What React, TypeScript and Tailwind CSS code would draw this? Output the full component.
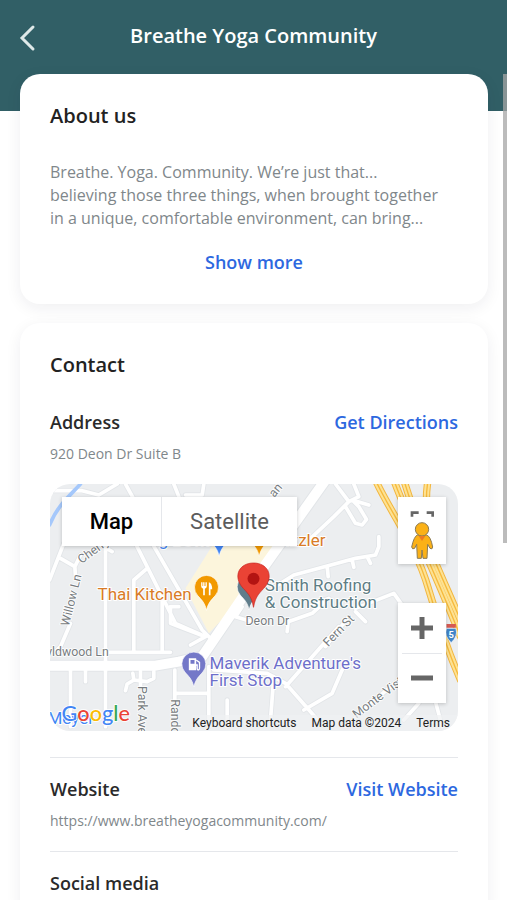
import type { ReactNode } from "react";

const localRoads = [
  "M12 32 L110 32 L160 45 L215 12",
  "M240 12 L262 52 M385 12 L400 50 M420 45 L470 45 L475 12",
  "M55 190 L12 300 M45 235 L88 260 L90 290 M88 260 L105 225",
  "M75 430 L45 500 L30 515",
  "M180 190 L180 740 M165 195 L200 215",
  "M270 190 L390 430 L480 470 M320 190 L470 450 L500 480",
  "M305 265 L265 300 L265 515 M350 355 L350 515",
  "M190 517 L375 517",
  "M75 570 L75 740 M120 560 L120 605",
  "M262 580 L265 600 L245 612 L240 632 M265 600 L305 605 L325 595 L325 575 M285 575 L285 620",
  "M400 380 L375 380 L375 430 L400 440 L480 470 L435 495",
  "M388 570 L388 660 M388 640 L490 640 L490 560 M490 640 L490 740 M545 660 L545 740",
  "M870 12 L910 65 L865 110 L790 180 M910 65 L940 50 L925 12 M900 80 L930 130 L950 135 L963 118 L940 80 L920 60 L970 75",
  "M690 320 L745 285 L845 258 L930 235 L990 225 L1000 200 L1000 170 M845 258 L848 290 M920 240 L925 262 M965 230 L975 250",
  "M570 410 L620 425 M590 380 L570 410 M725 455 L728 425 L800 400 L850 355 L800 375",
  "M930 385 L1045 340 L1070 375 M930 395 L960 425",
  "M880 440 L720 620 M910 410 L840 500 M505 570 L665 580 L720 610 L830 735",
  "M685 590 L675 720 M775 690 L860 640 L890 570",
  "M900 740 L1000 650 L1060 600 M1075 720 L1120 670 M1170 665 L1190 740",
];

const mainRoads = ["M12 557 L330 557 L400 545 L470 530", "M840 0 L620 310 L470 530"];

const freeways = [
  "M990 0 C1030 90 1110 190 1150 330 C1190 460 1210 520 1245 600",
  "M1045 0 C1080 100 1150 230 1245 470",
  "M1075 0 C1110 120 1180 270 1245 420",
  "M1148 0 C1140 40 1140 80 1150 150",
];

function Pin({ x, y, color, children }: { x: number; y: number; color: string; children?: ReactNode }) {
  return (
    <g transform={`translate(${x} ${y})`}>
      <path
        d="M0 66 C-5 42 -16 34 -27 21 A36 36 0 1 1 27 21 C16 34 5 42 0 66 Z"
        fill={color}
        stroke="#fff"
        strokeWidth="2"
      />
      {children}
    </g>
  );
}

function MapCanvas() {
  return (
    <svg
      viewBox="12 12 1227 741"
      preserveAspectRatio="xMidYMid slice"
      className="block h-full w-full"
      style={{ fontFamily: "Roboto, sans-serif" }}
      role="img"
      aria-label="Map of 920 Deon Dr"
    >
      <rect width="1260" height="770" fill="#eceef0" />

      {/* streets */}
      <g fill="none" strokeLinejoin="round" strokeLinecap="round">
        <path d={localRoads.join(" ")} stroke="#e2e5e8" strokeWidth="16" />
        <path d={mainRoads.join(" ")} stroke="#e2e5e8" strokeWidth="36" />
        <path d="M505 190 L690 190 L665 280 L490 460 L420 325 Z" fill="#fcf5dc" />
        <path d={localRoads.join(" ")} stroke="#fff" strokeWidth="11" />
        <path d={mainRoads.join(" ")} stroke="#fff" strokeWidth="30" />
        <path d="M12 135 C35 80 60 60 105 12" stroke="#a5c8fb" strokeWidth="11" />
        <path d={freeways.join(" ")} stroke="#f2b63f" strokeWidth="22" />
        <path d={freeways.join(" ")} stroke="#fde293" strokeWidth="16" />
        <path d={freeways.join(" ")} stroke="#f6b93c" strokeWidth="4" />
      </g>

      {/* street names */}
      <g fill="#777c80" fontSize="37" stroke="#fff" strokeWidth="5" paintOrder="stroke" strokeLinejoin="round">
        <text transform="translate(108 252) rotate(-36)">Cherry St</text>
        <text transform="translate(70 440) rotate(-76)">Willow Ln</text>
        <text x="2" y="528">yldwood Ln</text>
        <text transform="translate(276 618) rotate(90)">Park Ave</text>
        <text transform="translate(376 658) rotate(90)">Randolph</text>
        <text x="600" y="435">Deon Dr</text>
        <text transform="translate(848 502) rotate(-46)">Fern St</text>
        <text transform="translate(933 716) rotate(-37)">Monte Vista</text>
        <text transform="translate(686 54) rotate(-50)">an</text>
      </g>

      {/* places */}
      <g fontSize="51" stroke="#fff" strokeWidth="6" paintOrder="stroke" strokeLinejoin="round">
        <text x="156" y="359" fill="#d97b26">Thai Kitchen</text>
        <text x="690" y="199" fill="#d97b26">Sizzler</text>
        <text x="340" y="197" fill="#4285f4">g Bowl</text>
        <text x="658" y="333" fill="#5e7d84">Smith Roofing</text>
        <text x="658" y="385" fill="#5e7d84">&amp; Construction</text>
        <text x="492" y="566" fill="#6d6fca">Maverik Adventure's</text>
        <text x="492" y="618" fill="#6d6fca">First Stop</text>
        <text x="6" y="731" fill="#4285f4">Meyer</text>
      </g>
      <Pin x={521} y={163} color="#4285f4" />
      <Pin x={641} y={163} color="#f29900" />
      <Pin x={483} y={325} color="#f29900">
        <path
          d="M-16 -18 V-6 Q-16 0 -10 1 V21 H-5 V1 Q1 0 1 -6 V-18 H-3 V-7 H-6 V-18 H-10 V-7 H-12 V-18 Z M7 21 V-18 Q17 -15 17 3 H12 V21 Z"
          fill="#fff"
        />
      </Pin>
      <Pin x={445} y={555} color="#7478c8">
        <path d="M-15 -20 H7 V16 H-15 Z" fill="#fff" />
        <path d="M-10 -15 H2 V-4 H-10 Z" fill="#7478c8" />
        <path d="M7 -15 L17 -8 V10 Q17 15 13 15 Q10 15 10 10 V0 H6" fill="none" stroke="#fff" strokeWidth="4" />
      </Pin>
      <Pin x={611} y={324} color="#607d8b" />
      <path
        d="M624 382 C618 346 604 338 588 319 C563 285 583 249 624 249 C665 249 685 285 660 319 C644 338 630 346 624 382 Z"
        fill="#ea4335"
        stroke="#c5221f"
        strokeWidth="2"
      />
      <circle cx="624" cy="296" r="18" fill="#b31412" />

      {/* interstate shield */}
      <path d="M1203 445 H1231 Q1239 468 1217 488 Q1195 468 1203 445 Z" fill="#4285c8" stroke="#fff" strokeWidth="2" />
      <path d="M1203 432 H1231 V443 H1203 Z" fill="#d65a52" />
      <text x="1217" y="474" fill="#fff" fontSize="28" fontWeight="700" textAnchor="middle">5</text>

      <text
        x="48"
        y="724"
        fontFamily="Lato, sans-serif"
        fontSize="65"
        fontWeight="500"
        stroke="#fff"
        strokeWidth="5"
        paintOrder="stroke"
      >
        <tspan fill="#4285f4">G</tspan>
        <tspan fill="#ea4335">o</tspan>
        <tspan fill="#fbbc04">o</tspan>
        <tspan fill="#4285f4">g</tspan>
        <tspan fill="#34a853">l</tspan>
        <tspan fill="#ea4335">e</tspan>
      </text>
    </svg>
  );
}

function Pegman() {
  return (
    <svg viewBox="0 0 72 144" className="h-12 w-6" aria-hidden="true">
      <path d="M6 17 V5 H26 M50 5 H68 V17" fill="none" stroke="#666" strokeWidth="8" />
      <g fill="#fbb117" stroke="#8b7b55" strokeWidth="3" strokeLinejoin="round">
        <path d="M22 72 Q12 76 5 108 Q7 117 14 112 L20 100 L22 142 H34 L36 117 L39 142 H51 L53 100 L60 112 Q67 117 68 108 Q62 76 50 72 Z" />
        <circle cx="36" cy="55" r="20" />
      </g>
      <path d="M26 75 H46 L36 90 Z" fill="#ee7b22" />
    </svg>
  );
}

function MapPanel() {
  return (
    <div className="relative h-[247px] overflow-hidden rounded-[20px] font-[Roboto,sans-serif]">
      <MapCanvas />
      <div className="absolute top-[13px] left-3 flex h-[49px] bg-white text-[22px] shadow-[0_1px_4px_rgba(0,0,0,0.2)]">
        <button type="button" className="w-[100px] border-r border-gray-200 font-medium text-black">
          Map
        </button>
        <button type="button" className="w-[135px] text-[#5c5c5c]">
          Satellite
        </button>
      </div>
      <button
        type="button"
        aria-label="Street View"
        className="absolute top-[13px] right-3 flex h-[67px] w-12 items-center justify-center bg-white pt-2 shadow-[0_1px_4px_rgba(0,0,0,0.2)]"
      >
        <Pegman />
      </button>
      <div className="absolute right-3 bottom-7 flex h-[100px] w-12 flex-col bg-white shadow-[0_1px_4px_rgba(0,0,0,0.2)]">
        <button type="button" aria-label="Zoom in" className="flex flex-1 items-center justify-center">
          <svg viewBox="0 0 22 22" className="h-[22px] w-[22px]">
            <path d="M11 0 V22 M0 11 H22" stroke="#666" strokeWidth="5" />
          </svg>
        </button>
        <div className="mx-1 h-px bg-gray-200" />
        <button type="button" aria-label="Zoom out" className="flex flex-1 items-center justify-center">
          <svg viewBox="0 0 22 22" className="h-[22px] w-[22px]">
            <path d="M0 11 H22" stroke="#666" strokeWidth="5" />
          </svg>
        </button>
      </div>
      <div className="absolute right-0 bottom-0 flex h-4 items-center gap-[15px] bg-[#eff1f2]/70 pr-2 text-[12px] leading-4 text-[#222]">
        <button type="button">Keyboard shortcuts</button>
        <span>Map data ©2024</span>
        <a href="#terms">Terms</a>
      </div>
    </div>
  );
}

function Card({ children }: { children: ReactNode }) {
  return (
    <section className="rounded-[20px] bg-white px-[30px] pt-7 shadow-[0_4px_16px_rgba(30,30,60,0.07)]">
      {children}
    </section>
  );
}

function RowHeader({ title, link, href }: { title: string; link?: string; href?: string }) {
  return (
    <div className="flex items-center justify-between text-[18px] leading-6 font-semibold">
      <h3 className="text-[#2a2a2a]">{title}</h3>
      {link && (
        <a href={href} className="text-[#2d68e0]">
          {link}
        </a>
      )}
    </div>
  );
}

export default function App() {
  return (
    <div className="relative h-screen overflow-hidden bg-white font-['Open_Sans',sans-serif]">
      <header className="grid h-[111px] grid-cols-[40px_1fr_40px] items-start bg-[#315f66] px-[15px] pt-5 text-white">
        <button type="button" aria-label="Back" className="flex h-9 items-center pl-1">
          <svg viewBox="0 0 18 28" className="h-7 w-[18px]" fill="none">
            <path d="M14 3 L3 14 L14 25" stroke="#dfe9e9" strokeWidth="3" strokeLinecap="round" />
          </svg>
        </button>
        <h1 className="text-center text-[20px] leading-8 font-semibold">Breathe Yoga Community</h1>
      </header>

      <main className="-mt-[37px] flex flex-col gap-[19px] pr-[19px] pl-5">
        <Card>
          <h2 className="text-[20px] leading-7 font-semibold text-[#222]">About us</h2>
          <p className="mt-[31px] text-[16px] leading-[23px] text-[#7f878b]">
            Breathe. Yoga. Community. We’re just that...
            <br />
            believing those three things, when brought together
            <br />
            in a unique, comfortable environment, can bring...
          </p>
          <div className="flex justify-center pt-5 pb-[30px]">
            <button type="button" className="text-[18px] leading-6 font-semibold text-[#2d68e0]">
              Show more
            </button>
          </div>
        </Card>

        <Card>
          <h2 className="text-[20px] leading-7 font-semibold text-[#222]">Contact</h2>
          <div className="divide-y divide-gray-200">
            <div className="pt-[31px] pb-[26px]">
              <RowHeader title="Address" link="Get Directions" href="#directions" />
              <p className="mt-[10px] mb-5 text-[14px] leading-5 text-[#7f878b]">920 Deon Dr Suite B</p>
              <MapPanel />
            </div>
            <div className="pt-[19px] pb-5">
              <RowHeader title="Website" link="Visit Website" href="https://www.breatheyogacommunity.com/" />
              <p className="mt-[10px] text-[14px] leading-5 text-[#7f878b]">https://www.breatheyogacommunity.com/</p>
            </div>
            <div className="pt-[19px] pb-7">
              <RowHeader title="Social media" />
            </div>
          </div>
        </Card>
      </main>

      {/* scroll thumb */}
      <div className="absolute top-[74px] right-0 h-[469px] w-1 bg-[#a6a6a6]/75" />
    </div>
  );
}
